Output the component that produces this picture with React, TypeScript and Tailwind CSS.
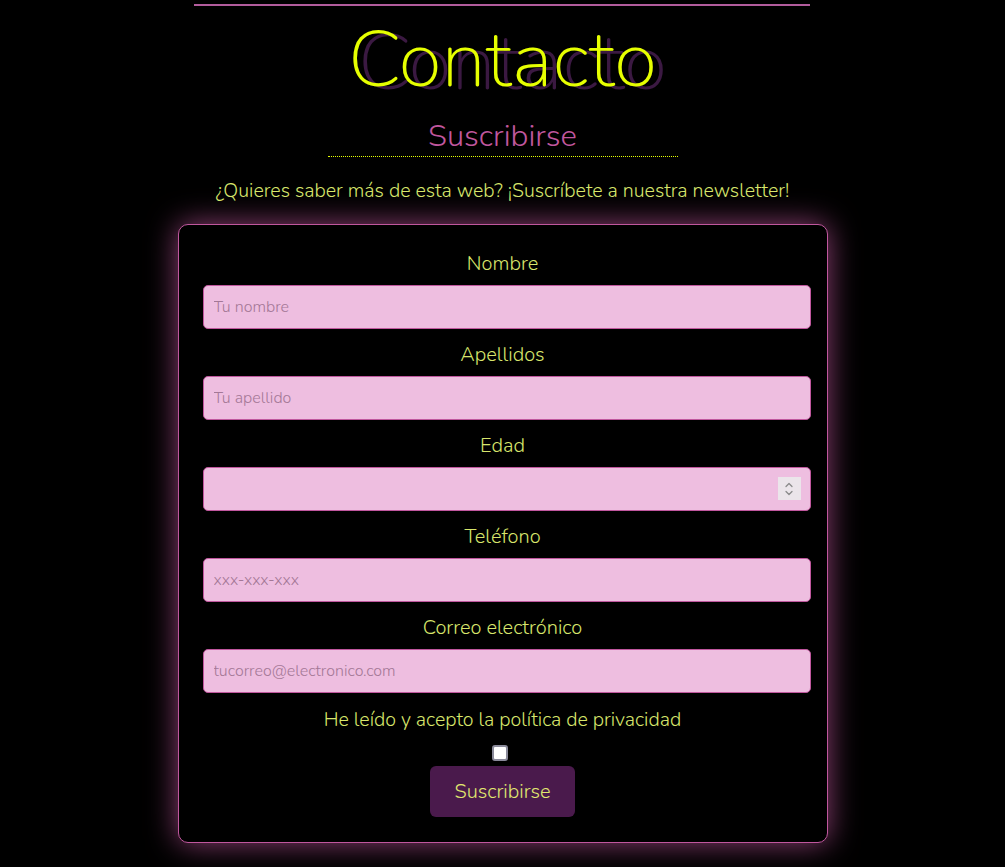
import { ChevronUp, ChevronDown } from 'lucide-react'

const font = { fontFamily: 'Nunito, Lato, "Open Sans", sans-serif' }

function Field({ label, placeholder, spinner }: { label: string; placeholder?: string; spinner?: boolean }) {
  return (
    <div className="flex flex-col mb-[15px]">
      <label className="text-center text-[20px] leading-[22px] text-[#d8e66c] font-light mb-[10px]">{label}</label>
      <div className="relative w-[608px]">
        <input
          type="text"
          placeholder={placeholder}
          className="w-full h-[44px] bg-[#eebee0] border border-[#c0579e] rounded-[5px] pl-[10px] text-[16px] font-light text-[#5a2a4a] placeholder:text-[#a47896] outline-none"
        />
        {spinner && (
          <div className="absolute right-[10px] top-[10px] w-[23px] h-[23px] bg-[#ebe5ea] flex flex-col items-center justify-center text-[#8a8a8a]">
            <ChevronUp size={12} strokeWidth={2.5} className="-mb-[2px]" />
            <ChevronDown size={12} strokeWidth={2.5} className="-mt-[2px]" />
          </div>
        )}
      </div>
    </div>
  )
}

export default function App() {
  return (
    <div className="min-h-[867px] bg-black text-[#d8e66c] font-light" style={font}>
      <div className="w-[616px] mx-auto pt-[4px] -translate-x-[1px]">
        <div className="border-t-2 border-[#b25c9c]" />
      </div>

      <h1
        className="text-center text-[80px] leading-[96px] font-extralight text-[#e6ff00] mt-[6px]"
        style={{ textShadow: '10px 3px 0 #3b1942' }}
      >
        Contacto
      </h1>

      <h2 className="text-center text-[31px] leading-[36px] text-[#c0579e] font-light mt-[10px]">Suscribirse</h2>
      <div className="w-[350px] mx-auto border-t border-dotted border-[#e6ff00] mt-[2px]" />

      <p className="text-center text-[19.6px] leading-[24px] text-[#d8e66c] mt-[22px]">
        ¿Quieres saber más de esta web? ¡Suscríbete a nuestra newsletter!
      </p>

      <form className="w-[650px] mx-auto mt-[21px] border border-[#c0579e] rounded-[10px] bg-black px-[24px] pt-[28px] pb-[25px] shadow-[0_0_30px_rgba(192,87,158,0.75)]">
        <Field label="Nombre" placeholder="Tu nombre" />
        <Field label="Apellidos" placeholder="Tu apellido" />
        <Field label="Edad" spinner />
        <Field label="Teléfono" placeholder="xxx-xxx-xxx" />
        <Field label="Correo electrónico" placeholder="tucorreo@electronico.com" />

        <div className="flex flex-col items-center mt-[16px]">
          <span className="text-[19.6px] leading-[22px] text-[#d8e66c]">He leído y acepto la política de privacidad</span>
          <span className="mt-[14px] w-[16px] h-[16px] bg-white border-2 border-[#8a8a9a] rounded-[3px] -ml-[6px]" />
          <button
            type="button"
            className="mt-[5px] w-[145px] h-[51px] bg-[#4a1a4c] rounded-[6px] text-[20px] text-[#e0e870] font-light"
          >
            Suscribirse
          </button>
        </div>
      </form>
    </div>
  )
}
